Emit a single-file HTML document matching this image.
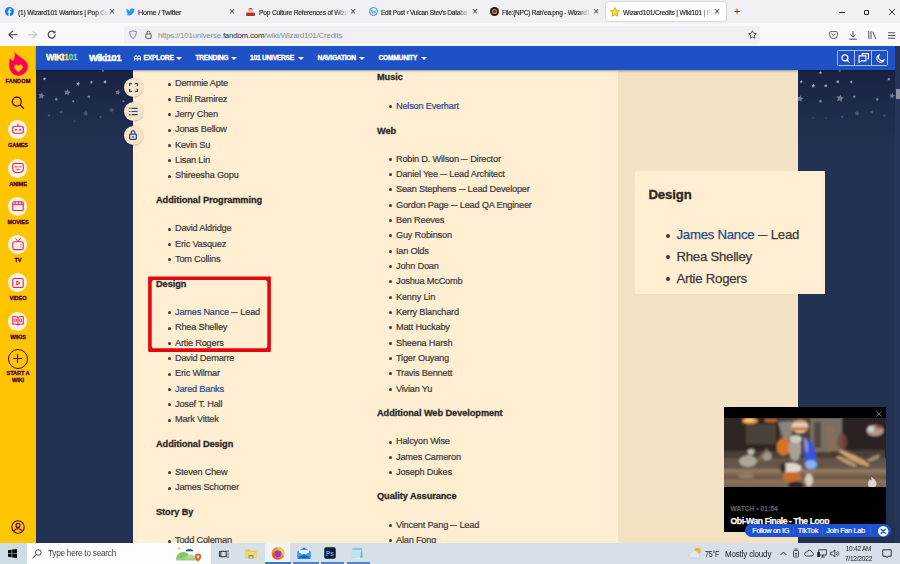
<!DOCTYPE html>
<html><head><meta charset="utf-8"><title>Wizard101/Credits | Wiki101 | Fandom</title>
<style>
*{box-sizing:border-box;margin:0;padding:0}
html,body{width:900px;height:564px;overflow:hidden;background:#233252;font-family:"Liberation Sans",sans-serif}
#root{position:relative;width:900px;height:564px;overflow:hidden}
.abs{position:absolute}
svg{position:absolute;overflow:visible}
/* browser chrome */
#tabs{left:0;top:0;width:900px;height:23px;background:#f0f0f4}
#urlbar{left:0;top:23px;width:900px;height:23px;background:#f9f9fb}
#acttab{left:606px;top:2px;width:120px;height:19px;background:#fff;border-radius:2.5px;box-shadow:0 0 1.5px rgba(0,0,0,.45)}
.tab{position:absolute;transform-origin:0 50%;top:5.5px;height:14px;font-size:7.6px;color:#15141a;white-space:nowrap;line-height:14px;letter-spacing:-.27px;-webkit-text-stroke:.12px;overflow:hidden}
.tab.f{-webkit-mask-image:linear-gradient(90deg,#000 85%,transparent);mask-image:linear-gradient(90deg,#000 85%,transparent)}
.tx{position:absolute;top:4.6px;font-size:10.2px;line-height:14px;color:#35353a;width:10px;text-align:center}
#urlfield{left:124px;top:25.5px;width:636px;height:18px;background:#f0f0f4;border-radius:3px}
#url{left:158px;top:28.8px;font-size:7.9px;line-height:13px;color:#8a8a92;letter-spacing:-.2px;white-space:nowrap}
#url b{font-weight:normal;color:#26262a}
/* page */
#sidebar{left:0;top:45.5px;width:36px;height:497.5px;background:#ffc500}
#nav{left:36px;top:45.5px;width:859px;height:24.4px;background:#1e50c6;box-shadow:0 .5px 2px rgba(0,0,0,.35)}
#bgtop{left:36px;top:70px;width:864px;height:75px;background:linear-gradient(#192344,#233252)}
#content{left:133px;top:70px;width:485px;height:473px;background:#ffeed2}
#rail{left:617.7px;top:70px;width:180.5px;height:473px;background:#f3e1c3}
#scroll{left:895.3px;top:45.5px;width:4.7px;height:497.5px;background:#27345a}
#thumb{left:895.5px;top:89px;width:4.5px;height:10px;background:#8d93a3}
.col{position:absolute;font-size:9.2px;line-height:15.33px;color:#3a3a3a;letter-spacing:-.2px;white-space:nowrap;-webkit-text-stroke:.2px}
.col b{display:block;color:#2b2b2b;letter-spacing:-.05px;-webkit-text-stroke:.3px}
.col i{display:block;font-style:normal;position:relative}
.col i::before{content:"";position:absolute;left:-7px;top:6.2px;width:3px;height:3px;border-radius:50%;background:#3a3a3a}
.col u,.pl u{display:inline-block;text-decoration:none;width:.72em;transform:scaleX(.72);transform-origin:0 50%}
.col a,.pop a{color:#254a8e}
.sl{-webkit-text-stroke:.3px #520044;position:absolute;left:0;width:36px;text-align:center;font-size:5.6px;font-weight:bold;color:#520044;line-height:7px;letter-spacing:-.1px}
.sc{position:absolute;left:8px;width:19px;height:19px;border-radius:50%;background:#fff3df}
.fb{position:absolute;left:123.5px;width:19px;height:19px;border-radius:50%;background:#f5e3c6;box-shadow:0 .5px 2px rgba(0,0,0,.3)}
.pl{font-size:13.2px;line-height:16px;color:#3a3a3a;letter-spacing:-.25px;white-space:nowrap;-webkit-text-stroke:.25px}
.pb{left:666px;width:4px;height:4px;border-radius:50%;background:#3a3a3a}
.pt{top:526.3px;font-size:7.4px;line-height:9px;color:#fff;white-space:nowrap;letter-spacing:-.1px;-webkit-text-stroke:.2px #fff}
.nv{position:absolute;top:53px;font-size:6.7px;line-height:9px;font-weight:bold;color:#fff;white-space:nowrap;letter-spacing:-.27px;-webkit-text-stroke:.35px #fff}
.car{margin-left:-.2px;position:absolute;top:56.5px;width:0;height:0;border-left:3px solid transparent;border-right:3px solid transparent;border-top:3.4px solid #fff}
#taskbar{left:0;top:542.7px;width:900px;height:21.3px;background:#d5e0e9}
.tk{position:absolute;font-size:8.2px;color:#1c1c1c;white-space:nowrap;line-height:10px;letter-spacing:-.15px}
</style></head><body><div id="root">
<div id="tabs" class="abs"></div>
<div id="urlbar" class="abs"></div>
<div id="acttab" class="abs"></div>
<div id="urlfield" class="abs"></div>
<!--TABS-->
<!-- tab favicons -->
<svg style="left:4.5px;top:7px" width="9" height="9" viewBox="0 0 9 9"><circle cx="4.5" cy="4.5" r="4.5" fill="#1877f2"/><path d="M5 9V5.6h1.1l.2-1.3H5v-.8c0-.4.2-.7.7-.7h.6V1.7s-.5-.1-1-.1c-1.1 0-1.7.6-1.7 1.800v.9H2.500v1.300h1.100V9z" fill="#fff"/></svg>
<div class="tab f" style="left:17.5px;width:101.0px;transform:scaleX(0.893)">(1) Wizard101 Warriors | Pop Cu</div><div class="tx" style="left:107px">×</div>
<svg style="left:126px;top:7.500px" width="9" height="8" viewBox="0 0 24 20"><path d="M23.600 2.400c-.900.400-1.800.600-2.800.800 1-.600 1.800-1.600 2.100-2.700-.900.600-2 1-3.100 1.200C18.900.700 17.700.200 16.400.200c-2.700 0-4.800 2.200-4.800 4.800 0 .400 0 .800.100 1.100C7.700 5.900 4.100 4 1.700 1.100c-.400.700-.700 1.600-.700 2.400 0 1.700.900 3.200 2.200 4-.800 0-1.500-.200-2.200-.600v.1c0 2.300 1.700 4.300 3.900 4.700-.400.100-.800.200-1.300.200-.300 0-.600 0-.900-.100.600 1.900 2.400 3.300 4.500 3.400-1.700 1.300-3.700 2.100-6 2.100-.400 0-.800 0-1.200-.100 2.200 1.400 4.700 2.200 7.400 2.200 8.900 0 13.800-7.400 13.800-13.800v-.600c.900-.700 1.700-1.500 2.400-2.600z" fill="#1d9bf0"/></svg>
<div class="tab" style="left:138px;width:60px;transform:scaleX(.96)">Home / Twitter</div><div class="tx" style="left:227px">×</div>
<svg style="left:246px;top:7px" width="9" height="9" viewBox="0 0 9 9"><rect x="0" y="5.500" width="9" height="3.500" rx="1" fill="#b5322a"/><circle cx="4.500" cy="3.200" r="2.300" fill="#e8b89a"/><path d="M2.200 2.600Q4.500-.800 6.800 2.600Q4.500 1.600 2.200 2.600z" fill="#8a2c20"/></svg>
<div class="tab f" style="left:259px;width:101.0px;transform:scaleX(0.889)">Pop Culture References of Wiza</div><div class="tx" style="left:348px">×</div>
<svg style="left:368.500px;top:7px" width="9" height="9" viewBox="0 0 9 9"><circle cx="4.500" cy="4.500" r="4" fill="#e9f3f8" stroke="#3d8fb5" stroke-width="1"/><text x="4.500" y="6.600" font-family="Liberation Serif,serif" font-size="6" font-weight="bold" fill="#3d8fb5" text-anchor="middle">W</text></svg>
<div class="tab f" style="left:381px;width:104.2px;transform:scaleX(0.854)">Edit Post ‹ Vulcan Stev's Databa</div><div class="tx" style="left:470px">×</div>
<svg style="left:489.500px;top:7px" width="9" height="9" viewBox="0 0 9 9"><circle cx="4.500" cy="4.500" r="4.500" fill="#2a1a10"/><circle cx="4.500" cy="4.500" r="2.600" fill="#b08a52"/><circle cx="4.500" cy="4.500" r="1.200" fill="#3a2414"/></svg>
<div class="tab f" style="left:502px;width:103.1px;transform:scaleX(0.859)">File:(NPC) Rah'ea.png - Wizard1</div><div class="tx" style="left:591px">×</div>
<svg style="left:610px;top:6.500px" width="10" height="10" viewBox="0 0 10 10"><path d="M5 .4l1.400 3 3.200.400-2.400 2.200.700 3.300L5 7.700 2.100 9.300l.700-3.300L.4 3.800l3.200-.400z" fill="#f5e21a" stroke="#b59a10" stroke-width=".7" stroke-linejoin="round"/></svg>
<div class="tab f" style="left:623px;width:101.0px;transform:scaleX(0.893)">Wizard101/Credits | Wiki101 | Fa</div><div class="tx" style="left:712px">×</div>
<div class="tx" style="left:732px;font-size:11px;top:4px;color:#4a4a50">+</div>
<!-- window controls -->
<div class="abs" style="left:839px;top:11.500px;width:6px;height:1px;background:#222"></div>
<div class="abs" style="left:864px;top:9.500px;width:5px;height:5px;border:1px solid #222;border-radius:1px"></div>
<svg style="left:889px;top:8.500px" width="6" height="6" viewBox="0 0 6 6"><path d="M0 0L6 6M6 0L0 6" stroke="#222" stroke-width=".9"/></svg>
<!-- url bar icons -->
<svg style="left:8.300px;top:30.300px" width="9.400" height="9.400" viewBox="0 0 8 8"><path d="M7.500 4H.8M3.800 1L.8 4l3 3" fill="none" stroke="#3c3c42" stroke-width=".9" stroke-linecap="round" stroke-linejoin="round"/></svg>
<svg style="left:28px;top:30.300px" width="9.400" height="9.400" viewBox="0 0 8 8"><path d="M.5 4h6.700M4.200 1l3 3-3 3" fill="none" stroke="#c4c4ca" stroke-width=".9" stroke-linecap="round" stroke-linejoin="round"/></svg>
<svg style="left:47.300px;top:30.200px" width="9.400" height="9.400" viewBox="0 0 8 8"><path d="M7 4a3 3 0 1 1-1-2.300" fill="none" stroke="#3c3c42" stroke-width=".95" stroke-linecap="round"/><path d="M7.200.5v2.200H5z" fill="#3c3c42"/></svg>
<svg style="left:129px;top:30px" width="8" height="9" viewBox="0 0 8 9"><path d="M4 .6c1 .700 2 1 3.300 1 0 3-.800 5.400-3.300 6.800C1.500 7 .7 4.600.7 1.600 2 1.600 3 1.300 4 .6z" fill="none" stroke="#6a6ad8" stroke-width=".9" stroke-linejoin="round"/></svg>
<svg style="left:144.500px;top:30px" width="7" height="9" viewBox="0 0 7 9"><rect x=".8" y="4" width="5.400" height="4.300" rx=".8" fill="none" stroke="#4a4a50" stroke-width=".9"/><path d="M2 4V2.600a1.500 1.500 0 0 1 3 0V4" fill="none" stroke="#4a4a50" stroke-width=".9"/></svg>
<div id="url" class="abs">https://101universe.<b>fandom.com</b>/wiki/Wizard101/Credits</div>
<svg style="left:747.500px;top:30px" width="9" height="9" viewBox="0 0 10 10"><path d="M5 .8l1.300 2.800 3 .400-2.200 2.100.600 3L5 7.600 2.300 9.100l.600-3L.7 4l3-.400z" fill="none" stroke="#3c3c42" stroke-width=".9" stroke-linejoin="round"/></svg>
<svg style="left:829px;top:31px" width="9" height="8" viewBox="0 0 9 8"><path d="M1.500.6h6a1 1 0 0 1 1 1v2a4 4 0 0 1-8 0v-2a1 1 0 0 1 1-1z" fill="none" stroke="#3c3c42" stroke-width=".8"/><path d="M2.800 3l1.700 1.600L6.200 3" fill="none" stroke="#3c3c42" stroke-width=".8" stroke-linecap="round"/></svg>
<svg style="left:848.500px;top:30.500px" width="8" height="9" viewBox="0 0 8 9"><path d="M4 .5v5.300M1.800 3.800L4 6l2.200-2.200M.6 8.200h6.800" fill="none" stroke="#3c3c42" stroke-width=".9" stroke-linecap="round" stroke-linejoin="round"/></svg>
<svg style="left:867.500px;top:31px" width="9" height="8" viewBox="0 0 9 8"><path d="M.8.500v7M3 .5v7M5 1.200l2.600 6.300" fill="none" stroke="#3c3c42" stroke-width=".9" stroke-linecap="round"/></svg>
<svg style="left:887.500px;top:31.500px" width="7" height="7" viewBox="0 0 7 7"><path d="M0 .8h7M0 3.500h7M0 6.200h7" stroke="#3c3c42" stroke-width=".9"/></svg>
<!--/TABS-->
<div id="bgtop" class="abs"></div>
<!--STARS-->
<svg style="left:0;top:0;filter:blur(.35px)" width="900" height="150" viewBox="0 0 900 150">
<polygon points="44.8,77.2 45.1,78.3 46.2,78.7 45.3,79.3 45.2,80.5 44.3,79.7 43.2,80.1 43.6,79.0 43.0,78.1 44.1,78.1" fill="#c9cdd2" opacity="0.80"/>
<polygon points="78.6,81.6 78.9,83.1 80.4,83.6 79.1,84.5 79.1,86.0 77.9,85.0 76.4,85.5 77.0,84.0 76.1,82.8 77.6,82.9" fill="#c9cdd2" opacity="0.70"/>
<polygon points="91.6,80.5 91.9,81.6 93.0,82.0 92.1,82.6 92.0,83.8 91.1,83.0 90.0,83.4 90.4,82.3 89.8,81.4 90.9,81.4" fill="#c9cdd2" opacity="0.70"/>
<polygon points="105.5,79.9 105.8,81.2 107.1,81.7 106.0,82.4 105.9,83.7 104.9,82.9 103.6,83.3 104.1,82.0 103.3,80.9 104.7,81.0" fill="#c9cdd2" opacity="0.75"/>
<polygon points="103.3,69.4 103.5,70.3 104.4,70.6 103.6,71.2 103.6,72.1 102.9,71.5 101.9,71.8 102.3,70.9 101.7,70.1 102.7,70.1" fill="#c9cdd2" opacity="0.70"/>
<polygon points="67.9,89.0 68.5,91.2 70.6,92.0 68.7,93.2 68.6,95.5 66.9,94.1 64.7,94.7 65.5,92.6 64.2,90.7 66.5,90.8" fill="#c9cdd2" opacity="0.50"/>
<polygon points="42.1,92.5 42.7,94.7 44.8,95.5 42.9,96.7 42.8,99.0 41.1,97.6 38.9,98.2 39.7,96.1 38.4,94.2 40.7,94.3" fill="#c9cdd2" opacity="0.50"/>
<polygon points="56.7,97.2 57.0,98.5 58.3,99.0 57.2,99.7 57.1,101.0 56.1,100.2 54.8,100.6 55.3,99.3 54.5,98.2 55.9,98.3" fill="#c9cdd2" opacity="0.55"/>
<polygon points="73.5,99.9 73.7,100.8 74.6,101.1 73.8,101.7 73.8,102.6 73.1,102.0 72.1,102.3 72.5,101.4 71.9,100.6 72.9,100.6" fill="#c9cdd2" opacity="0.60"/>
<polygon points="89.1,95.1 89.4,96.2 90.5,96.6 89.6,97.2 89.5,98.4 88.6,97.6 87.5,98.0 87.9,96.9 87.3,96.0 88.4,96.0" fill="#c9cdd2" opacity="0.60"/>
<polygon points="118.4,89.6 118.9,91.4 120.7,92.1 119.1,93.1 119.0,95.0 117.5,93.8 115.7,94.3 116.4,92.6 115.3,91.0 117.2,91.1" fill="#c9cdd2" opacity="0.50"/>
<polygon points="123.8,99.9 124.0,100.8 124.9,101.1 124.1,101.7 124.1,102.6 123.4,102.0 122.4,102.3 122.8,101.4 122.2,100.6 123.2,100.6" fill="#c9cdd2" opacity="0.50"/>
<polygon points="112.1,107.3 112.6,109.1 114.4,109.8 112.8,110.8 112.7,112.7 111.2,111.5 109.4,112.0 110.1,110.3 109.0,108.7 110.9,108.8" fill="#c9cdd2" opacity="0.28"/>
<polygon points="86.2,110.6 86.7,112.4 88.5,113.1 86.9,114.1 86.8,116.0 85.3,114.8 83.5,115.3 84.2,113.6 83.1,112.0 85.0,112.1" fill="#c9cdd2" opacity="0.25"/>
<polygon points="61.6,110.0 61.9,111.3 63.2,111.8 62.1,112.5 62.0,113.8 61.0,113.0 59.7,113.4 60.2,112.1 59.4,111.0 60.8,111.1" fill="#c9cdd2" opacity="0.30"/>
<polygon points="49.3,113.8 49.6,114.9 50.7,115.3 49.8,115.9 49.7,117.1 48.8,116.3 47.7,116.7 48.1,115.6 47.5,114.7 48.6,114.7" fill="#c9cdd2" opacity="0.28"/>
<polygon points="100.8,115.3 101.1,116.4 102.2,116.8 101.3,117.4 101.2,118.6 100.3,117.8 99.2,118.2 99.6,117.1 99.0,116.2 100.1,116.2" fill="#c9cdd2" opacity="0.25"/>
<polygon points="74.9,119.5 75.2,120.6 76.3,121.0 75.4,121.6 75.3,122.8 74.4,122.0 73.3,122.4 73.7,121.3 73.1,120.4 74.2,120.4" fill="#c9cdd2" opacity="0.15"/>
<polygon points="820.8,71.1 821.1,72.2 822.2,72.6 821.3,73.2 821.2,74.4 820.3,73.6 819.2,74.0 819.6,72.9 819.0,72.0 820.1,72.0" fill="#c9cdd2" opacity="0.80"/>
<polygon points="840.0,69.4 840.2,70.3 841.1,70.6 840.3,71.2 840.3,72.1 839.6,71.5 838.6,71.8 839.0,70.9 838.4,70.1 839.4,70.1" fill="#c9cdd2" opacity="0.70"/>
<polygon points="801.6,80.0 801.9,81.1 803.0,81.5 802.1,82.1 802.0,83.3 801.1,82.5 800.0,82.9 800.4,81.8 799.8,80.9 800.9,80.9" fill="#c9cdd2" opacity="0.75"/>
<polygon points="813.8,83.5 814.1,85.0 815.6,85.5 814.3,86.4 814.3,87.9 813.1,86.9 811.6,87.4 812.2,85.9 811.3,84.7 812.8,84.8" fill="#c9cdd2" opacity="0.70"/>
<polygon points="826.2,83.8 826.5,85.1 827.8,85.6 826.7,86.3 826.6,87.6 825.6,86.8 824.3,87.2 824.8,85.9 824.0,84.8 825.4,84.9" fill="#c9cdd2" opacity="0.70"/>
<polygon points="838.2,79.7 838.5,81.0 839.8,81.5 838.7,82.2 838.6,83.5 837.6,82.7 836.3,83.1 836.8,81.8 836.0,80.7 837.4,80.8" fill="#c9cdd2" opacity="0.70"/>
<polygon points="851.6,80.3 851.9,81.4 853.0,81.8 852.1,82.4 852.0,83.6 851.1,82.8 850.0,83.2 850.4,82.1 849.8,81.2 850.9,81.2" fill="#c9cdd2" opacity="0.70"/>
<polygon points="889.1,77.5 889.4,78.6 890.5,79.0 889.6,79.6 889.5,80.8 888.6,80.0 887.5,80.4 887.9,79.3 887.3,78.4 888.4,78.4" fill="#c9cdd2" opacity="0.75"/>
<polygon points="800.7,95.3 801.3,97.5 803.4,98.3 801.5,99.5 801.4,101.8 799.7,100.4 797.5,101.0 798.3,98.9 797.0,97.0 799.3,97.1" fill="#c9cdd2" opacity="0.50"/>
<polygon points="840.8,94.4 841.5,96.9 844.0,97.8 841.8,99.3 841.7,102.0 839.6,100.3 837.0,101.0 838.0,98.5 836.5,96.3 839.2,96.5" fill="#c9cdd2" opacity="0.50"/>
<polygon points="854.5,95.0 854.8,96.1 855.9,96.5 855.0,97.1 854.9,98.3 854.0,97.5 852.9,97.9 853.3,96.8 852.7,95.9 853.8,95.9" fill="#c9cdd2" opacity="0.55"/>
<polygon points="820.9,99.3 821.2,100.6 822.5,101.1 821.4,101.8 821.3,103.1 820.3,102.3 819.0,102.7 819.5,101.4 818.7,100.3 820.1,100.4" fill="#c9cdd2" opacity="0.50"/>
<polygon points="877.6,97.2 877.9,98.5 879.2,99.0 878.1,99.7 878.0,101.0 877.0,100.2 875.7,100.6 876.2,99.3 875.4,98.2 876.8,98.3" fill="#c9cdd2" opacity="0.50"/>
<polygon points="892.6,93.0 893.1,94.8 894.9,95.5 893.3,96.5 893.2,98.4 891.7,97.2 889.9,97.7 890.6,96.0 889.5,94.4 891.4,94.5" fill="#c9cdd2" opacity="0.50"/>
<polygon points="857.6,110.5 858.1,112.3 859.9,113.0 858.3,114.0 858.2,115.9 856.7,114.7 854.9,115.2 855.6,113.5 854.5,111.9 856.4,112.0" fill="#c9cdd2" opacity="0.25"/>
<polygon points="872.5,109.7 872.8,111.2 874.3,111.7 873.0,112.6 873.0,114.1 871.8,113.1 870.3,113.6 870.9,112.1 870.0,110.9 871.5,111.0" fill="#c9cdd2" opacity="0.28"/>
<polygon points="842.5,115.0 842.8,116.1 843.9,116.5 843.0,117.1 842.9,118.3 842.0,117.5 840.9,117.9 841.3,116.8 840.7,115.9 841.8,115.9" fill="#c9cdd2" opacity="0.25"/>
<polygon points="884.5,114.1 884.8,115.2 885.9,115.6 885.0,116.2 884.9,117.4 884.0,116.6 882.9,117.0 883.3,115.9 882.7,115.0 883.8,115.0" fill="#c9cdd2" opacity="0.25"/>
<polygon points="813.6,116.9 813.8,117.8 814.7,118.1 813.9,118.7 813.9,119.6 813.2,119.0 812.2,119.3 812.6,118.4 812.0,117.6 813.0,117.6" fill="#c9cdd2" opacity="0.15"/>
<polygon points="826.1,116.9 826.3,117.8 827.2,118.1 826.4,118.7 826.4,119.6 825.7,119.0 824.7,119.3 825.1,118.4 824.5,117.6 825.5,117.6" fill="#c9cdd2" opacity="0.15"/>
</svg>
<!--/STARS-->
<div id="content" class="abs"></div>
<div id="rail" class="abs"></div>
<div id="sidebar" class="abs"></div>
<div id="nav" class="abs"></div>
<div id="scroll" class="abs"></div>
<div id="thumb" class="abs"></div>
<!--NAV-->
<div class="abs" id="logo" style="left:46px;top:52px;font-size:9px;line-height:11px;font-weight:bold;color:#fff6d8;letter-spacing:-.55px;-webkit-text-stroke:.3px;white-space:nowrap;text-shadow:0 .5px 0 #c9a94a">WIKI<span style="color:#f5d34a;text-shadow:none">1</span><span style="color:#7fd36a;text-shadow:none">0</span><span style="color:#6fc3ee;text-shadow:none">1</span></div>
<div class="abs" id="wname" style="left:89px;top:51.500px;font-size:9.6px;line-height:12px;font-weight:bold;color:#fff;letter-spacing:-.52px;-webkit-text-stroke:.45px #fff;white-space:nowrap">Wiki101</div>
<svg style="left:133.500px;top:54px" width="7" height="7" viewBox="0 0 7 7"><path d="M.6 6.500V3.200a1.400 1.400 0 0 1 2.800 0V6.500M3.600 6.500V3.200a1.400 1.400 0 0 1 2.800 0V6.500M.6 4.800h2.800M3.600 4.800h2.800" fill="none" stroke="#fff" stroke-width="1"/></svg>
<div class="nv" id="n1" style="left:143.500px">EXPLORE</div><div class="car" style="left:176.500px"></div>
<div class="nv" id="n2" style="left:195.500px">TRENDING</div><div class="car" style="left:231px"></div>
<div class="nv" id="n3" style="left:250px">101 UNIVERSE</div><div class="car" style="left:298.500px"></div>
<div class="nv" id="n4" style="left:317.500px">NAVIGATION</div><div class="car" style="left:359.500px"></div>
<div class="nv" id="n5" style="left:378.500px">COMMUNITY</div><div class="car" style="left:421.500px"></div>
<div class="abs" style="left:837px;top:50px;width:51px;height:15.600px;border:1px solid #a9bdf0;border-radius:1.500px"></div>
<div class="abs" style="left:853.800px;top:50px;width:1px;height:15.600px;background:#a9bdf0"></div>
<div class="abs" style="left:871px;top:50px;width:1px;height:15.600px;background:#a9bdf0"></div>
<svg style="left:841.200px;top:53.900px" width="9" height="9" viewBox="0 0 9 9"><circle cx="3.900" cy="3.900" r="3" fill="none" stroke="#fff" stroke-width="1.300"/><path d="M6 6l2.300 2.300" stroke="#fff" stroke-width="1.200" stroke-linecap="round"/></svg>
<svg style="left:857.500px;top:53px" width="11" height="10" viewBox="0 0 11 10"><path d="M4.200 2.400V.6h6.300v5.200H9.400" fill="none" stroke="#fff" stroke-width="1.100" stroke-linejoin="round"/><path d="M1 2.900h6.900v5H3.400L1 9.600z" fill="none" stroke="#fff" stroke-width="1.100" stroke-linejoin="round"/></svg>
<svg style="left:875.500px;top:53.500px" width="9" height="9" viewBox="0 0 9 9"><path d="M3.600.8A3.800 3.800 0 1 0 8.200 5.600 3.200 3.200 0 0 1 3.600.8z" fill="none" stroke="#fff" stroke-width="1.100" stroke-linejoin="round"/></svg>
<!--/NAV-->
<!--SIDEBAR-->
<svg style="left:8.500px;top:50.500px" width="19" height="25" viewBox="0 0 19 25"><path d="M5.500.2C6.500 3 9 4.200 12 6.500c4 3 6.800 4.800 6.800 9 0 5-4.300 9.200-9.300 9.200S.2 20.200.2 14.700C.2 11.500.4 9 .8 6.800c1 1.700 2.200 2.800 3.400 3.400C5.800 7 6.300 3.500 5.500.2z" fill="#fa005a"/><path d="M9.500 21.300l-3.700-3.600a2.300 2.300 0 0 1 3.300-3.300l.4.400.4-.4a2.300 2.300 0 0 1 3.300 3.300z" fill="#ffc500"/></svg>
<div class="sl" style="top:77.500px;font-size:5.700px;letter-spacing:.05px">FANDOM</div>
<svg style="left:11px;top:95.500px" width="14" height="14" viewBox="0 0 14 14"><circle cx="5.800" cy="5.600" r="4.500" fill="none" stroke="#520044" stroke-width="1.200"/><path d="M9.200 9l3.400 3.400" stroke="#520044" stroke-width="1.300" stroke-linecap="round"/></svg>
<div class="sc" style="top:119.800px"></div>
<svg style="left:11.500px;top:123px" width="12" height="12" viewBox="0 0 12 12"><rect x=".7" y="3.200" width="10.600" height="7" rx="2.200" fill="none" stroke="#e0215f" stroke-width="1.100"/><path d="M6 3.200V1" stroke="#e0215f" stroke-width="1.100" stroke-linecap="round"/><circle cx="3.900" cy="6.700" r=".95" fill="#e0215f"/><circle cx="8.100" cy="6.700" r=".95" fill="#e0215f"/></svg>
<div class="sl" style="top:141.500px">GAMES</div>
<div class="sc" style="top:158.900px"></div>
<svg style="left:11.500px;top:162.400px" width="12" height="12" viewBox="0 0 12 12"><path d="M2.500 1.500h7a1.800 1.800 0 0 1 1.800 1.800v3.400a3.800 3.800 0 0 1-3.800 3.800H4.500A3.800 3.800 0 0 1 .7 6.700V3.300a1.800 1.800 0 0 1 1.800-1.800z" fill="none" stroke="#e0215f" stroke-width="1.100"/><path d="M3 4.800h2M7 4.800h2M4.800 7.600h2.400" stroke="#e0215f" stroke-width="1" stroke-linecap="round"/></svg>
<div class="sl" style="top:181px">ANIME</div>
<div class="sc" style="top:196.500px"></div>
<svg style="left:11.500px;top:200px" width="12" height="12" viewBox="0 0 12 12"><rect x=".8" y="1.700" width="10.400" height="8.800" rx="1.300" fill="none" stroke="#e0215f" stroke-width="1.100"/><path d="M.8 4.600h10.400M3.600 1.700l-.8 2.900M6.600 1.700l-.8 2.900M9.600 1.700l-.8 2.900" stroke="#e0215f" stroke-width="1"/></svg>
<div class="sl" style="top:218.500px">MOVIES</div>
<div class="sc" style="top:235px"></div>
<svg style="left:11.500px;top:238px" width="12" height="13" viewBox="0 0 12 13"><rect x=".8" y="3.800" width="10.400" height="7.800" rx="1.500" fill="none" stroke="#e0215f" stroke-width="1.100"/><path d="M3.800.8L6 3.600 8.200.8" fill="none" stroke="#e0215f" stroke-width="1" stroke-linecap="round"/><circle cx="8.900" cy="6.600" r=".6" fill="#e0215f"/><circle cx="8.900" cy="8.800" r=".6" fill="#e0215f"/></svg>
<div class="sl" style="top:256.800px">TV</div>
<div class="sc" style="top:273.300px"></div>
<svg style="left:11.500px;top:277px" width="12" height="12" viewBox="0 0 12 12"><rect x=".8" y="1.500" width="10.400" height="9" rx="1.500" fill="none" stroke="#e0215f" stroke-width="1.100"/><path d="M4.800 4l3 2-3 2z" fill="none" stroke="#e0215f" stroke-width="1" stroke-linejoin="round"/></svg>
<div class="sl" style="top:295.200px">VIDEO</div>
<div class="sc" style="top:311.500px"></div>
<svg style="left:11.500px;top:315.300px" width="12" height="12" viewBox="0 0 12 12"><path d="M6 2.600C4.800 1.600 2.600 1.400.8 1.800v7.400c1.800-.4 4-.2 5.200.8 1.200-1 3.400-1.200 5.200-.8V1.800C9.400 1.400 7.200 1.600 6 2.600zM6 2.600V10" fill="none" stroke="#e0215f" stroke-width="1.100" stroke-linejoin="round"/><path d="M2.500 4h2v2.500h-2zM7.500 4h2v2.500h-2z" fill="none" stroke="#e0215f" stroke-width=".7"/></svg>
<div class="sl" style="top:333.800px">WIKIS</div>
<div class="abs" style="left:7.500px;top:348.800px;width:20px;height:20px;border-radius:50%;border:1.100px solid #520044"></div>
<svg style="left:13px;top:354.300px" width="9" height="9" viewBox="0 0 9 9"><path d="M4.500.5v8M.5 4.500h8" stroke="#520044" stroke-width="1.100" stroke-linecap="round"/></svg>
<div class="sl" style="top:370px;line-height:6.600px">START A<br>WIKI</div>
<svg style="left:10.500px;top:520px" width="14" height="14" viewBox="0 0 14 14"><circle cx="7" cy="7" r="6.200" fill="none" stroke="#520044" stroke-width="1.100"/><circle cx="7" cy="5.400" r="2" fill="none" stroke="#520044" stroke-width="1.100"/><path d="M3 11.200c.6-1.800 2.200-2.500 4-2.500s3.400.7 4 2.500" fill="none" stroke="#520044" stroke-width="1.100"/></svg>
<!--/SIDEBAR-->
<!--FLOAT-->
<div class="fb" style="top:77.500px"></div><div class="fb" style="top:102px"></div><div class="fb" style="top:126px"></div>
<svg style="left:128.500px;top:82.500px" width="9" height="9" viewBox="0 0 9 9"><path d="M.6 3V.6H3M6 .6h2.400V3M8.400 6v2.400H6M3 8.400H.6V6" fill="none" stroke="#274a8c" stroke-width="1.200"/></svg>
<svg style="left:128.500px;top:107px" width="9" height="9" viewBox="0 0 9 9"><path d="M2.600 1.300h6M2.600 4.500h6M2.600 7.700h6" stroke="#274a8c" stroke-width="1.200"/><path d="M.2 1.300h1.300M.2 4.500h1.300M.2 7.700h1.300" stroke="#274a8c" stroke-width="1.200"/></svg>
<svg style="left:129px;top:130px" width="8" height="10" viewBox="0 0 8 10"><rect x=".7" y="4.200" width="6.600" height="5.100" rx=".8" fill="none" stroke="#274a8c" stroke-width="1.300"/><path d="M2.200 4.200V2.600a1.800 1.800 0 0 1 3.600 0v1.600" fill="none" stroke="#274a8c" stroke-width="1.200"/><rect x="3.200" y="6" width="1.600" height="1.600" fill="#274a8c"/></svg>
<!--/FLOAT-->

<div class="col" style="left:175px;top:76.4px">
<i>Demmie Apte</i><i>Emil Ramirez</i><i>Jerry Chen</i><i>Jonas Bellow</i><i>Kevin Su</i><i>Lisan Lin</i><i>Shireesha Gopu</i>
</div>
<div class="col" style="left:156px;top:192.8px"><b>Additional Programming</b></div>
<div class="col" style="left:175px;top:221.4px">
<i>David Aldridge</i><i>Eric Vasquez</i><i>Tom Collins</i>
</div>
<div class="col" style="left:156px;top:277px"><b>Design</b></div>
<div class="col" style="left:175px;top:305.1px">
<i><a>James Nance</a> <u>—</u> Lead</i><i>Rhea Shelley</i><i>Artie Rogers</i><i>David Demarre</i><i>Eric Wilmar</i><i><a>Jared Banks</a></i><i>Josef T. Hall</i><i>Mark Vittek</i>
</div>
<div class="col" style="left:156px;top:436.5px"><b>Additional Design</b></div>
<div class="col" style="left:175px;top:465.1px">
<i>Steven Chew</i><i>James Schomer</i>
</div>
<div class="col" style="left:156px;top:504.8px"><b>Story By</b></div>
<div class="col" style="left:175px;top:533.4px"><i>Todd Coleman</i></div>

<div class="col" style="left:377px;top:70.3px"><b>Music</b></div>
<div class="col" style="left:396px;top:98.9px"><i><a>Nelson Everhart</a></i></div>
<div class="col" style="left:377px;top:124px"><b>Web</b></div>
<div class="col" style="left:396px;top:151.6px">
<i>Robin D. Wilson <u>—</u> Director</i><i>Daniel Yee <u>—</u> Lead Architect</i><i>Sean Stephens <u>—</u> Lead Developer</i><i>Gordon Page <u>—</u> Lead QA Engineer</i><i>Ben Reeves</i><i>Guy Robinson</i><i>Ian Olds</i><i>John Doan</i><i>Joshua McComb</i><i>Kenny Lin</i><i>Kerry Blanchard</i><i>Matt Huckaby</i><i>Sheena Harsh</i><i>Tiger Ouyang</i><i>Travis Bennett</i><i>Vivian Yu</i>
</div>
<div class="col" style="left:377px;top:405.5px"><b>Additional Web Development</b></div>
<div class="col" style="left:396px;top:434.4px">
<i>Halcyon Wise</i><i>James Cameron</i><i>Joseph Dukes</i>
</div>
<div class="col" style="left:377px;top:489.4px"><b>Quality Assurance</b></div>
<div class="col" style="left:396px;top:517.6px">
<i>Vincent Pang <u>—</u> Lead</i><i>Alan Fong</i>
</div>

<svg style="left:0;top:0" width="300" height="360" viewBox="0 0 300 360"><path d="M148.9 276.4H270.09999999999997A0.8 0.8 0 0 1 270.9 277.2V351.09999999999997A0.8 0.8 0 0 1 270.09999999999997 351.9H148.9A0.8 0.8 0 0 1 148.1 351.09999999999997V277.2A0.8 0.8 0 0 1 148.9 276.4ZM154.29999999999998 280.0H264.7A2.6 2.6 0 0 1 267.3 282.6V345.7A2.6 2.6 0 0 1 264.7 348.3H154.29999999999998A2.6 2.6 0 0 1 151.7 345.7V282.6A2.6 2.6 0 0 1 154.29999999999998 280.0Z" fill="#e3060f" fill-rule="evenodd"/></svg>

<!--POPUP-->
<div class="abs" style="left:634.500px;top:170.500px;width:190.500px;height:123px;background:#ffeed2"></div>
<div class="pop abs" id="ph" style="left:648.500px;top:186.500px;font-size:13.200px;line-height:16px;font-weight:bold;color:#2b2b2b;letter-spacing:-.15px;white-space:nowrap;-webkit-text-stroke:.35px">Design</div>
<div class="pop abs pl" id="p1" style="left:676.500px;top:227px"><a>James Nance</a> <u>—</u> Lead</div>
<div class="pop abs pl" id="p2" style="left:676.500px;top:248.900px">Rhea Shelley</div>
<div class="pop abs pl" id="p3" style="left:676.500px;top:270.800px">Artie Rogers</div>
<div class="abs pb" style="top:233.500px"></div><div class="abs pb" style="top:255.400px"></div><div class="abs pb" style="top:277.300px"></div>
<!--/POPUP-->
<!--VIDEO-->
<div class="abs" style="left:724px;top:407.200px;width:161.500px;height:125.300px;background:#000"></div>
<svg style="left:724px;top:417.500px;overflow:hidden" width="161.500" height="69.500" viewBox="0 0 161.500 69.500">
<defs><filter id="bl" x="-10%" y="-10%" width="120%" height="120%"><feGaussianBlur stdDeviation="1.100"/></filter></defs>
<rect width="161.500" height="69.500" fill="#4a3f36"/>
<g filter="url(#bl)">
<rect x="-5" y="-5" width="60" height="38" fill="#2f2822"/>
<rect x="22" y="6" width="30" height="20" fill="#51483f" opacity=".8"/>
<rect x="-5" y="49" width="172" height="26" fill="#7e6650"/>
<rect x="-5" y="40" width="172" height="10" fill="#62544a"/>
<rect x="-5" y="52" width="172" height="2.500" fill="#a08a72" opacity=".7"/>
<rect x="-5" y="58" width="172" height="2" fill="#5e4e40" opacity=".7"/>
<rect x="-5" y="63" width="172" height="2.500" fill="#96806a" opacity=".6"/>
<ellipse cx="26" cy="2.800" rx="8" ry="3" fill="#f09a3a"/>
<ellipse cx="25" cy="2.200" rx="4" ry="1.600" fill="#ffd27a"/>
<ellipse cx="47" cy="2.500" rx="7" ry="2" fill="#b5672c"/>
<rect x="86" y="0" width="32" height="34" fill="#7a736a" opacity=".9"/>
<rect x="90" y="4" width="7" height="26" fill="#4a4038" opacity=".8"/>
<rect x="103" y="8" width="9" height="30" fill="#8c6f58" opacity=".9" transform="rotate(-8 107 23)"/>
<rect x="118" y="-2" width="46" height="34" fill="#2c2420"/>
<ellipse cx="118" cy="24" rx="5" ry="9" fill="#7a4a3a" opacity=".8"/>
<ellipse cx="151" cy="12.500" rx="8.500" ry="5.500" fill="#b09a92"/>
<ellipse cx="155" cy="9" rx="3.500" ry="2" fill="#a03a34" opacity=".8"/>
<ellipse cx="147" cy="11" rx="3" ry="3" fill="#e0d6d0" opacity=".9"/>
<ellipse cx="130" cy="40" rx="17" ry="3" fill="#c8a272" transform="rotate(27 130 40)"/>
<ellipse cx="122" cy="43" rx="12" ry="2.200" fill="#b8956a" transform="rotate(27 122 43)"/>
<ellipse cx="150" cy="40" rx="7" ry="2" fill="#b8a080" opacity=".8" transform="rotate(-25 150 40)"/>
<ellipse cx="110" cy="36" rx="6" ry="3" fill="#3a302a" opacity=".8"/>
<ellipse cx="24" cy="43" rx="9" ry="6" fill="#bdb5aa" opacity=".85"/>
<ellipse cx="27" cy="34" rx="3.500" ry="3" fill="#d0c9be" opacity=".9"/>
<ellipse cx="43" cy="38" rx="5" ry="4.500" fill="#b5ada2" opacity=".8"/>
<rect x="30" y="36" width="16" height="2.500" fill="#8a6e5a" transform="rotate(-48 38 37)"/>
<ellipse cx="22" cy="58" rx="8" ry="2.500" fill="#a08a74" opacity=".7"/>
<path d="M54 4l14 -1v20l-9 -2z" fill="#8a857e"/>
<ellipse cx="76" cy="8.500" rx="8.500" ry="7" fill="#d8cfc2"/>
<rect x="68" y="9" width="16" height="4" fill="#d87a2e"/>
<rect x="69" y="2" width="13" height="2.500" fill="#d87a2e" opacity=".8"/>
<ellipse cx="59.500" cy="29" rx="7" ry="9" fill="#d5722a"/>
<ellipse cx="71" cy="30" rx="6.500" ry="13" fill="#a8a198"/>
<ellipse cx="72" cy="21" rx="6" ry="4" fill="#d0c9bd"/>
<ellipse cx="67" cy="50" rx="10.500" ry="5" fill="#e0dad0"/>
<ellipse cx="59" cy="50" rx="3" ry="5" fill="#3a302a"/>
<ellipse cx="68" cy="59" rx="9.500" ry="5" fill="#c86a2a"/>
<ellipse cx="72" cy="67" rx="8" ry="3.500" fill="#2e2824"/>
<ellipse cx="85" cy="62" rx="4" ry="6.500" fill="#d4ccbe"/>
<ellipse cx="86" cy="36" rx="6" ry="13.500" fill="#3557d8" transform="rotate(-8 86 36)"/>
<ellipse cx="87" cy="46.500" rx="6" ry="4.500" fill="#86b2fa"/>
<ellipse cx="82" cy="27" rx="2.200" ry="8" fill="#8a8ad8" transform="rotate(-8 82 27)"/>
</g>
<path d="M147 59c.7 1.400.6 2.500.1 3.500l-1.300-1.300c-.6 1-1.800 2.800-1.800 5.200 0 2.200 1.700 3.100 4.300 3.100s4.200-.9 4.200-3.400c0-2.200-1.200-3.800-2.500-5.100-1-1-2-1.600-3-2z" fill="#ece8e4" opacity=".85"/>
</svg>
<svg style="left:876px;top:410.500px" width="6" height="6" viewBox="0 0 6 6"><path d="M.5.500l5 5M5.500.5l-5 5" stroke="#8a8a8a" stroke-width=".8"/></svg>
<div class="abs" id="v1" style="left:730.500px;top:503.500px;font-size:6.600px;line-height:9px;font-weight:bold;color:#5c5c5c;letter-spacing:.05px;-webkit-text-stroke:.25px #5c5c5c;white-space:nowrap">WATCH • 01:54</div>
<div class="abs" id="v2" style="left:730.500px;top:516.200px;font-size:8.600px;line-height:11px;font-weight:bold;color:#fff;letter-spacing:-.4px;-webkit-text-stroke:.25px #fff;white-space:nowrap">Obi-Wan Finale - The Loop</div>
<div class="abs" style="left:745.300px;top:524.200px;width:145.700px;height:13.300px;border-radius:6.700px;background:#1f52d2"></div>
<div class="abs pt" id="f1" style="left:752.300px;letter-spacing:-.4px">Follow on IG</div>
<div class="abs pt" id="f2" style="left:797.800px">TikTok</div>
<div class="abs pt" id="f3" style="left:826.300px;letter-spacing:-.35px">Join Fan Lab</div>
<div class="abs" style="left:793.300px;top:526.500px;width:.8px;height:8.500px;background:#3a68d8"></div>
<div class="abs" style="left:821.600px;top:526.500px;width:.8px;height:8.500px;background:#3a68d8"></div>
<div class="abs" style="left:869.500px;top:526.500px;width:.8px;height:8.500px;background:#3a68d8"></div>
<svg style="left:878.200px;top:525.800px" width="10.400" height="10.400" viewBox="0 0 10.400 10.400"><circle cx="5.200" cy="5.200" r="5.200" fill="#fff"/><path d="M3.200 3.200l4 4M7.200 3.200l-4 4" stroke="#1f52d2" stroke-width="1.500" stroke-linecap="round"/></svg>
<!--/VIDEO-->
<div id="taskbar" class="abs"></div>
<!--TASK-->
<div class="abs" style="left:0;top:543px;width:26.500px;height:21px;background:#cfdde5"></div>
<div class="abs" style="left:26.500px;top:543px;width:184.500px;height:21px;background:#fdfdfe"></div>
<svg style="left:8.400px;top:548.800px" width="9" height="9" viewBox="0 0 9 9"><path d="M0 1.200L3.700.7v3.500H0zM4.200.6L9 0v4.200H4.200zM0 4.800h3.700v3.500L0 7.800zM4.200 4.800H9V9l-4.800-.6z" fill="#0a0a0a"/></svg>
<svg style="left:32px;top:548.500px" width="10" height="10" viewBox="0 0 10 10"><circle cx="6.300" cy="3.500" r="2.800" fill="none" stroke="#333" stroke-width=".9"/><path d="M4.300 5.600L.7 9.200" stroke="#333" stroke-width="1" stroke-linecap="round"/></svg>
<div class="tk" id="t1" style="left:48px;top:548.300px;font-size:8.900px;color:#3f3f3f;letter-spacing:-.27px;transform:scaleX(.927);transform-origin:0 0">Type here to search</div>
<!-- widget pic -->
<svg style="left:175px;top:545px" width="28" height="17" viewBox="0 0 28 17"><path d="M1 14.500c0-4 3-7.500 7-7.500 3 0 5 1.500 6.500 4l6 3.500z" fill="#8cc36a"/><path d="M9 14.500c1-3 3.500-5 6.500-5s5 2 6 5z" fill="#b9d98f"/><rect x="1" y="13.500" width="22" height="2" rx="1" fill="#9ccf7a"/><path d="M11 5.200c1.500-2 5.500-2 7 0z" fill="#3a6fd8"/><rect x="11" y="5" width="7" height="1.300" fill="#2a4fa8"/><path d="M4 1.500l.6 1.400 1.400.6-1.400.6L4 5.500l-.6-1.400L2 3.500l1.400-.6z" fill="#f2c230"/><path d="M23 8.500a3.200 3.200 0 0 1 3.200 3.200c0 2.300-3.200 5-3.200 5s-3.200-2.700-3.200-5A3.200 3.200 0 0 1 23 8.500z" fill="#e8622c"/><circle cx="23" cy="11.700" r="1.200" fill="#fff"/></svg>
<!-- task view -->
<svg style="left:218.500px;top:548.500px" width="10" height="10" viewBox="0 0 10 10"><rect x="1.800" y="2.300" width="5.400" height="5.400" fill="none" stroke="#2a2a2a" stroke-width="1"/><path d="M.4 2v6M9 1.300v2M9 4.300v2M9 7.300v1.500" stroke="#2a2a2a" stroke-width=".9"/></svg>
<!-- explorer -->
<svg style="left:244.500px;top:547.500px" width="12" height="11" viewBox="0 0 12 11"><path d="M.5 1.500h4l1 1.200h6v7.800H.5z" fill="#f3c443"/><rect x=".5" y="3.800" width="11" height="6.700" fill="#f7d86a"/><rect x="3.500" y="7" width="5" height="3.500" fill="#4a9be0"/><rect x="4.600" y="8.300" width="2.800" height="2.200" fill="#f7d86a"/></svg>
<!-- firefox -->
<div class="abs" style="left:264.500px;top:543px;width:25.500px;height:21px;background:#eef3f8"></div>
<svg style="left:270.500px;top:546px" width="14" height="14" viewBox="0 0 14 14"><circle cx="7" cy="7.200" r="6.300" fill="#ff8a1f"/><path d="M7 .9a6.300 6.300 0 0 1 6.300 6.300c0 1.500-.5 2.800-1.300 3.900.3-3-1.500-6-4.500-7C6 3.600 5 2.500 7 .9z" fill="#ffcf3a"/><circle cx="6.800" cy="7.800" r="3.400" fill="#8a3fd0"/><path d="M1 9.500c1 3 4 4.500 7 4 2.500-.5 4.500-2.500 5-5-1 2-3 3.500-5.500 3.200C5 11.500 3.500 10 3.500 8c0-1 .5-2 1.500-2.500C3 5.500 1.500 6.500 1 9.500z" fill="#ff4a3a"/></svg>
<!-- mail -->
<svg style="left:297px;top:547px" width="14" height="12" viewBox="0 0 14 12"><path d="M.5 4.500L7 .5l6.500 4v7H.5z" fill="#1a78d4"/><path d="M1.800 2.800h10.400v5H1.800z" fill="#e8f2fc"/><path d="M.5 4.500L7 8.500l6.500-4v7H.5z" fill="#2f9af0"/><path d="M.5 11.500L7 7l6.500 4.500z" fill="#1467c0"/></svg>
<!-- PS -->
<svg style="left:324px;top:547px" width="12" height="12" viewBox="0 0 13 13"><rect x=".3" y=".3" width="12.400" height="12.400" rx="1.800" fill="#0a1a2e"/><text x="6.500" y="9.400" font-family="Liberation Sans,sans-serif" font-size="7" font-weight="bold" fill="#4db2f8" text-anchor="middle">Ps</text></svg>
<!-- notepad -->
<svg style="left:349px;top:546.500px" width="14" height="13" viewBox="0 0 14 13"><path d="M3.500 1h9.500l-2 10.500H1.500z" fill="#bfe3ee"/><path d="M3.500 1h9.500l-.4 2H3.100z" fill="#8fc6da"/><path d="M11 11.500l2-10.500.6 9.500z" fill="#7fa9b8"/><path d="M1.500 11.500H11l2.600-1z" fill="#e8f3f7"/></svg>
<!-- running indicators -->
<div class="abs" style="left:265px;top:562.300px;width:26px;height:1.700px;background:#3b78c8"></div>
<div class="abs" style="left:292.700px;top:562.300px;width:26px;height:1.700px;background:#4b84cc"></div>
<div class="abs" style="left:320.700px;top:562.300px;width:23.500px;height:1.700px;background:#4b84cc"></div>
<div class="abs" style="left:346.800px;top:562.300px;width:23.500px;height:1.700px;background:#4b84cc"></div>
<!-- tray -->
<svg style="left:688px;top:546.500px" width="15" height="12" viewBox="0 0 15 12"><circle cx="9.500" cy="4" r="3.200" fill="#f5b21c"/><path d="M3 10.800a2.600 2.600 0 0 1 .3-5.200 3.600 3.600 0 0 1 6.800.6 2.400 2.400 0 0 1 .4 4.600z" fill="#e4e8ee" stroke="#b8bfc8" stroke-width=".4"/></svg>
<div class="tk" id="t2" style="left:705px;top:548.500px;font-size:8.300px;letter-spacing:-.3px;transform:scaleX(.86);transform-origin:0 0">75°F</div>
<div class="tk" id="t3" style="left:724.700px;top:548.500px;font-size:8.300px;letter-spacing:-.2px;transform:scaleX(.97);transform-origin:0 0">Mostly cloudy</div>
<svg style="left:780px;top:550.500px" width="7" height="5" viewBox="0 0 7 5"><path d="M.5 4L3.500 1l3 3" fill="none" stroke="#222" stroke-width=".9"/></svg>
<svg style="left:792px;top:548px" width="8" height="10" viewBox="0 0 8 10"><rect x="1.500" y="2.500" width="5" height="6.500" rx="1" fill="none" stroke="#222" stroke-width=".8"/><path d="M2.500 1h3M3 5.500h2M3 7h2" stroke="#222" stroke-width=".8"/></svg>
<svg style="left:804px;top:549px" width="10" height="8" viewBox="0 0 10 8"><path d="M2.500 7a2 2 0 0 1 .2-4 3 3 0 0 1 5.600.6 1.800 1.800 0 0 1-.3 3.400z" fill="none" stroke="#222" stroke-width=".8"/></svg>
<svg style="left:817px;top:548.500px" width="10" height="9" viewBox="0 0 10 9"><rect x="1.800" y=".8" width="7.500" height="5.200" fill="none" stroke="#222" stroke-width=".8"/><path d="M4 8h4M5.800 6v2" stroke="#222" stroke-width=".8"/><rect x=".3" y="3" width="2.600" height="5" fill="#222"/></svg>
<svg style="left:830px;top:548.500px" width="10" height="9" viewBox="0 0 10 9"><path d="M.6 3.200h1.800L4.800 1v7L2.400 5.800H.6z" fill="none" stroke="#222" stroke-width=".8" stroke-linejoin="round"/><path d="M6.200 3a2 2 0 0 1 0 3M7.600 1.800a4 4 0 0 1 0 5.400" fill="none" stroke="#222" stroke-width=".7"/></svg>
<div class="tk" id="t4" style="left:838px;top:543.700px;width:41px;text-align:center;font-size:7.800px;letter-spacing:-.3px;transform:scaleX(.84)">10:42 AM</div>
<div class="tk" id="t5" style="left:838px;top:553.700px;width:41px;text-align:center;font-size:7.800px;letter-spacing:-.3px;transform:scaleX(.85)">7/12/2022</div>
<svg style="left:881.500px;top:548.500px" width="10" height="10" viewBox="0 0 10 10"><path d="M.8.800h8.400v6.400H6L5 8.800 4 7.200H.8z" fill="none" stroke="#222" stroke-width=".9" stroke-linejoin="round"/></svg>
<!--/TASK-->
</div></body></html>
